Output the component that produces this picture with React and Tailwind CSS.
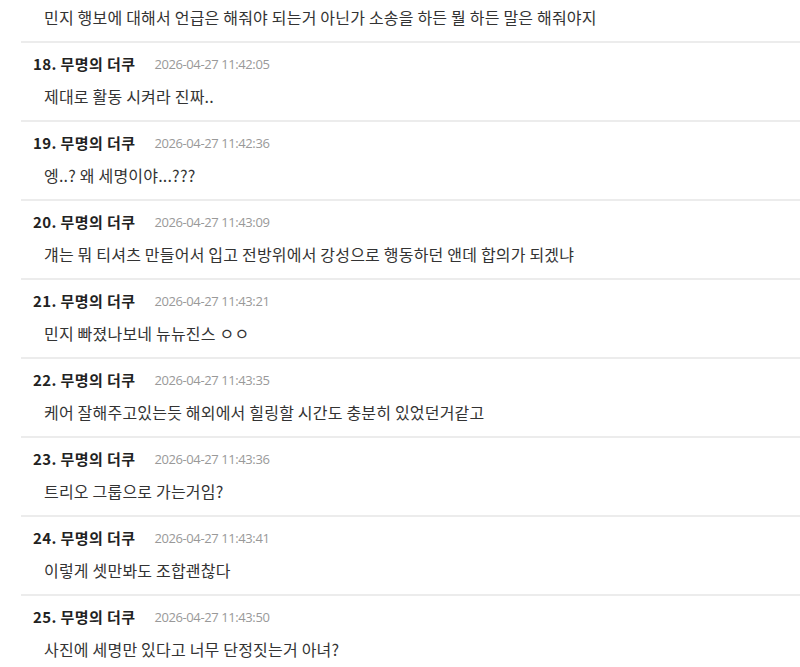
import React from "react";

const items = [
  { n: 18, t: "11:42:05", body: "제대로 활동 시켜라 진짜.." },
  { n: 19, t: "11:42:36", body: "엥..? 왜 세명이야...???" },
  { n: 20, t: "11:43:09", body: "걔는 뭐 티셔츠 만들어서 입고 전방위에서 강성으로 행동하던 앤데 합의가 되겠냐" },
  { n: 21, t: "11:43:21", body: "민지 빠졌나보네 뉴뉴진스 ㅇㅇ" },
  { n: 22, t: "11:43:35", body: "케어 잘해주고있는듯 해외에서 힐링할 시간도 충분히 있었던거같고" },
  { n: 23, t: "11:43:36", body: "트리오 그룹으로 가는거임?" },
  { n: 24, t: "11:43:41", body: "이렇게 셋만봐도 조합괜찮다" },
  { n: 25, t: "11:43:50", body: "사진에 세명만 있다고 너무 단정짓는거 아녀?" },
];

const kr = { fontFamily: '"Noto Sans CJK KR", "Noto Sans", sans-serif' };
const dateFont = { fontFamily: '"Open Sans", "Noto Sans", sans-serif' };

export default function App() {
  return (
    <div className="w-[800px] h-[667px] overflow-hidden bg-white pl-[21px]" style={kr}>
      <div className="pt-[7px] pb-[14px] pl-[23px] text-[16px] tracking-[0.2px] leading-[20px] text-[#333]">
        민지 행보에 대해서 언급은 해줘야 되는거 아닌가 소송을 하든 뭘 하든 말은 해줘야지
      </div>
      {items.map((it) => (
        <div key={it.n} className="border-t-2 border-[#ececec] pt-[11px] pb-[14px]">
          <div className="flex items-center pl-[12px] h-[20px]">
            <span className="text-[15px] font-bold tracking-[0.4px] text-[#222] leading-[20px]">
              {it.n}. 무명의 더쿠
            </span>
            <span className="ml-[19px] text-[13px] tracking-[-0.4px] text-[#999] leading-[20px]" style={dateFont}>
              2026-04-27 {it.t}
            </span>
          </div>
          <div className="mt-[12px] pl-[23px] text-[16px] tracking-[0.2px] leading-[20px] text-[#333]">{it.body}</div>
        </div>
      ))}
    </div>
  );
}
